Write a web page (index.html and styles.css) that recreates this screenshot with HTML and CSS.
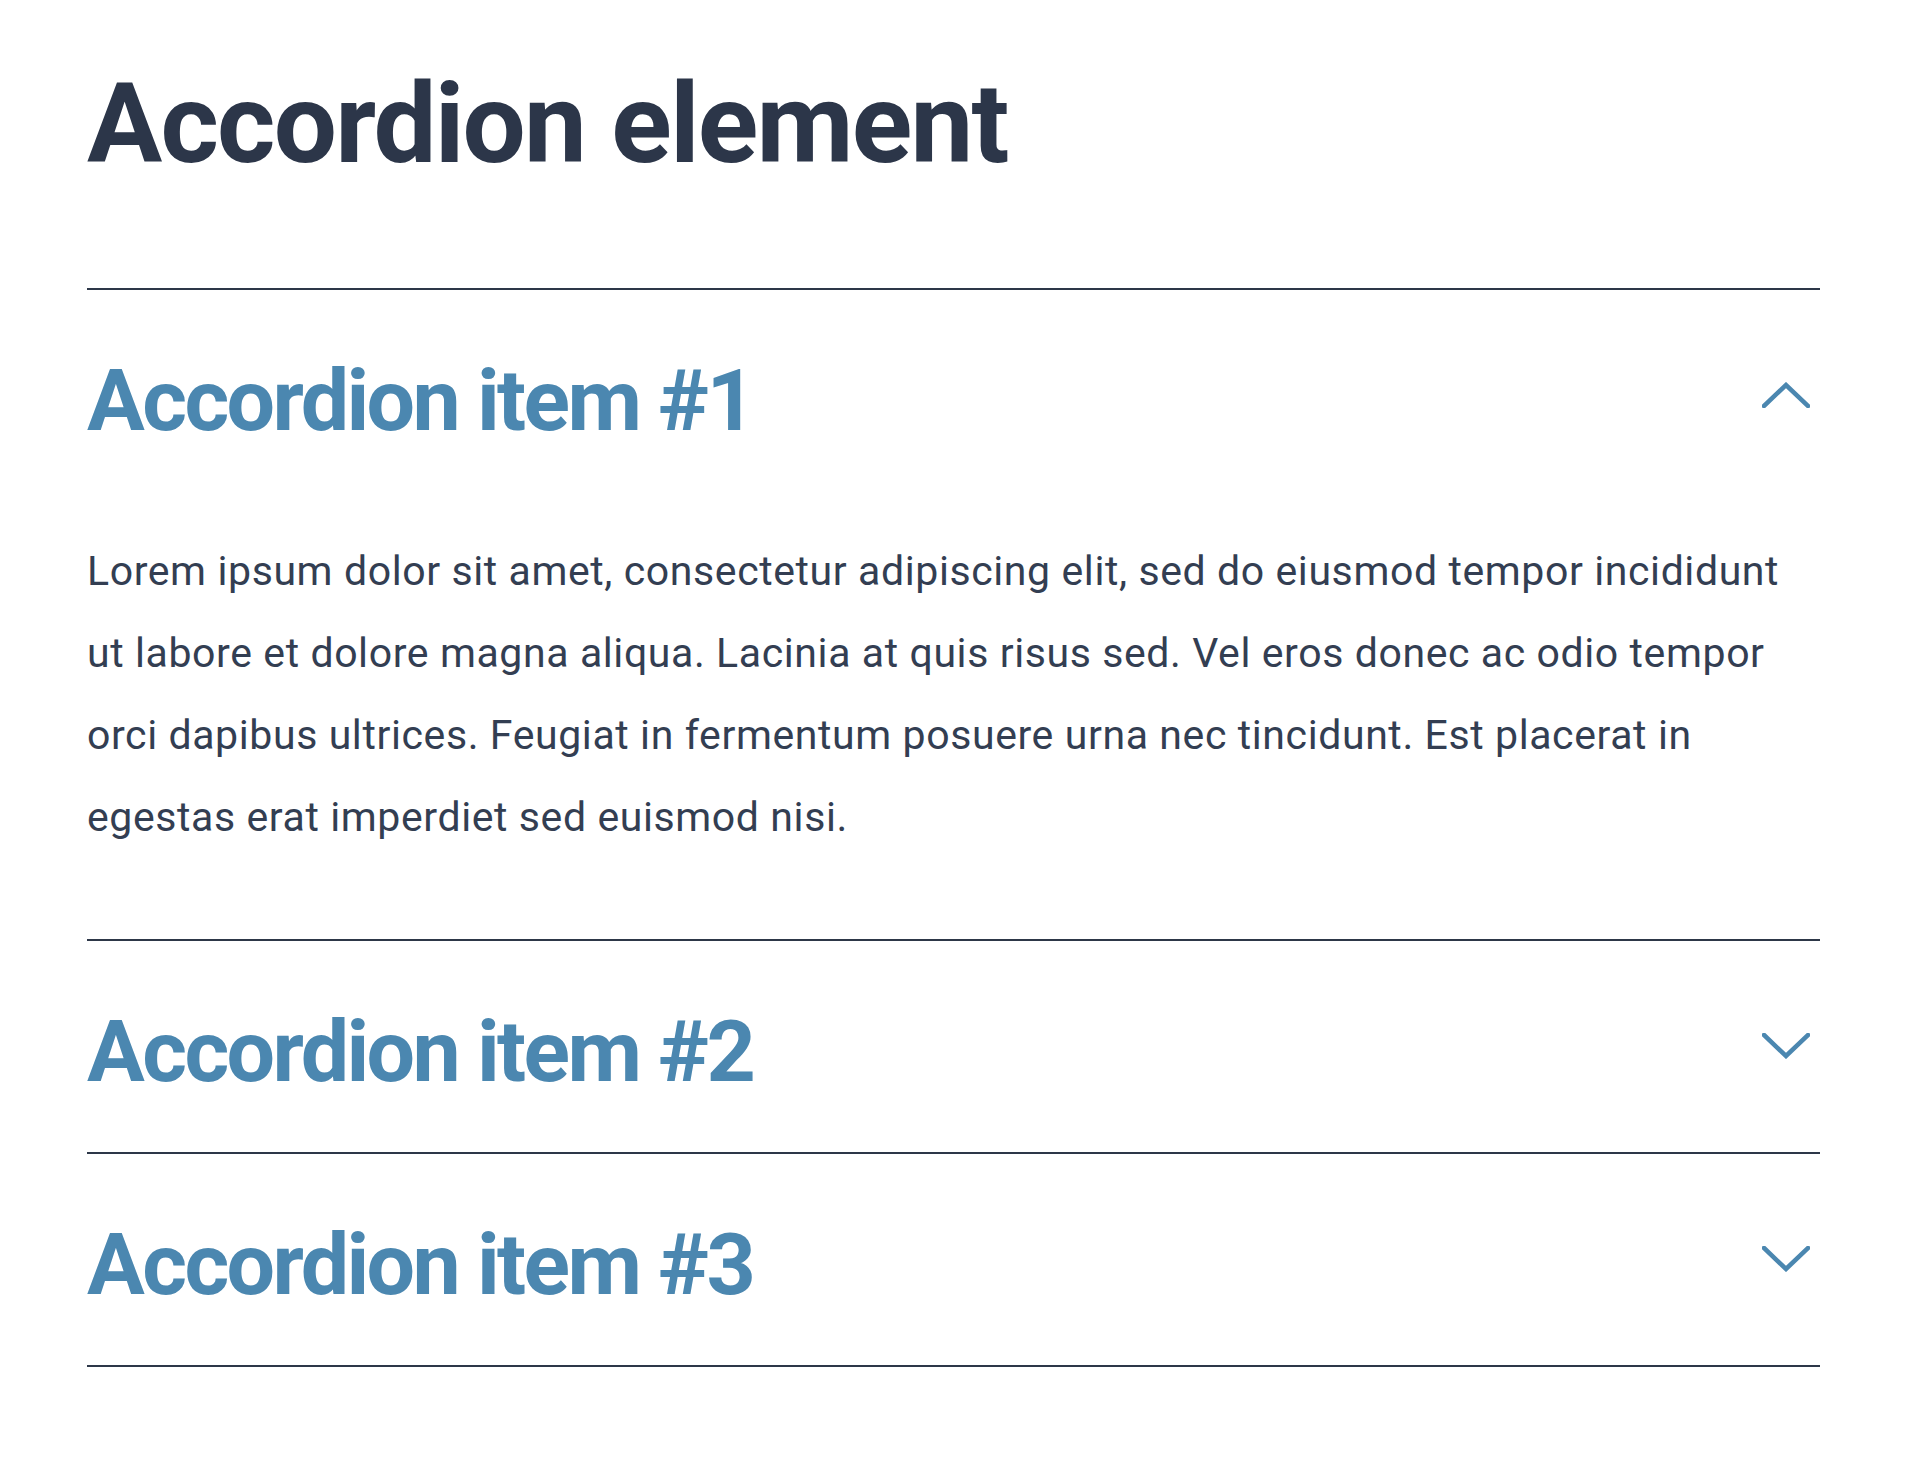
FILE: index.html
```html
<!DOCTYPE html>
<html lang="en">
<head>
<meta charset="utf-8">
<title>Accordion element</title>
<link rel="stylesheet" href="styles.css">
</head>
<body>
<main class="page">
  <h1 class="title">Accordion element</h1>
  <div class="accordion">
    <div class="item is-open">
      <button class="item-header" type="button" aria-expanded="true">
        <span class="item-title">Accordion item #1</span>
        <svg class="chevron" width="48" height="26" viewBox="0 0 48 26" aria-hidden="true"><polyline points="2,24 24,3 46,24" /></svg>
      </button>
      <div class="item-content">
        <p>Lorem ipsum dolor sit amet, consectetur adipiscing elit, sed do eiusmod tempor incididunt ut labore et dolore magna aliqua. Lacinia at quis risus sed. Vel eros donec ac odio tempor orci dapibus ultrices. Feugiat in fermentum posuere urna nec tincidunt. Est placerat in egestas erat imperdiet sed euismod nisi.</p>
      </div>
    </div>
    <div class="item">
      <button class="item-header" type="button" aria-expanded="false">
        <span class="item-title">Accordion item #2</span>
        <svg class="chevron" width="48" height="26" viewBox="0 0 48 26" aria-hidden="true"><polyline points="2,2 24,23 46,2" /></svg>
      </button>
    </div>
    <div class="item">
      <button class="item-header" type="button" aria-expanded="false">
        <span class="item-title">Accordion item #3</span>
        <svg class="chevron" width="48" height="26" viewBox="0 0 48 26" aria-hidden="true"><polyline points="2,2 24,23 46,2" /></svg>
      </button>
    </div>
  </div>
</main>
</body>
</html>
```

FILE: styles.css
```css
* { box-sizing: border-box; }

html, body {
  margin: 0;
  padding: 0;
  background: #ffffff;
}

body {
  font-family: Roboto, "Liberation Sans", sans-serif;
  color: #2d3748;
}

.page {
  padding: 68px 100px 80px 87px;
}

.title {
  margin: 0 0 108px;
  font-size: 112px;
  line-height: 112px;
  font-weight: 700;
  color: #2c3649;
  letter-spacing: -1.75px;
}

.accordion {
  border-top: 2px solid #2d3748;
}

.item {
  border-bottom: 2px solid #2d3748;
}

.item-header {
  display: flex;
  align-items: center;
  justify-content: space-between;
  width: 100%;
  margin: 0;
  padding: 68px 0 57px;
  border: 0;
  background: none;
  font: inherit;
  text-align: left;
  cursor: pointer;
}

.item-title {
  font-size: 86px;
  line-height: 86px;
  font-weight: 700;
  color: #4b87b0;
  letter-spacing: -2.6px;
}

.chevron {
  flex: none;
  margin: 0 10px 12px 0;
}

.chevron polyline {
  fill: none;
  stroke: #4b87b0;
  stroke-width: 4.5;
  stroke-linecap: square;
  stroke-linejoin: miter;
}

.item-content {
  padding: 29px 0 81px;
}

.item-content p {
  margin: 0;
  font-size: 41px;
  line-height: 82px;
  letter-spacing: 0.6px;
  color: #333e52;
}
```
